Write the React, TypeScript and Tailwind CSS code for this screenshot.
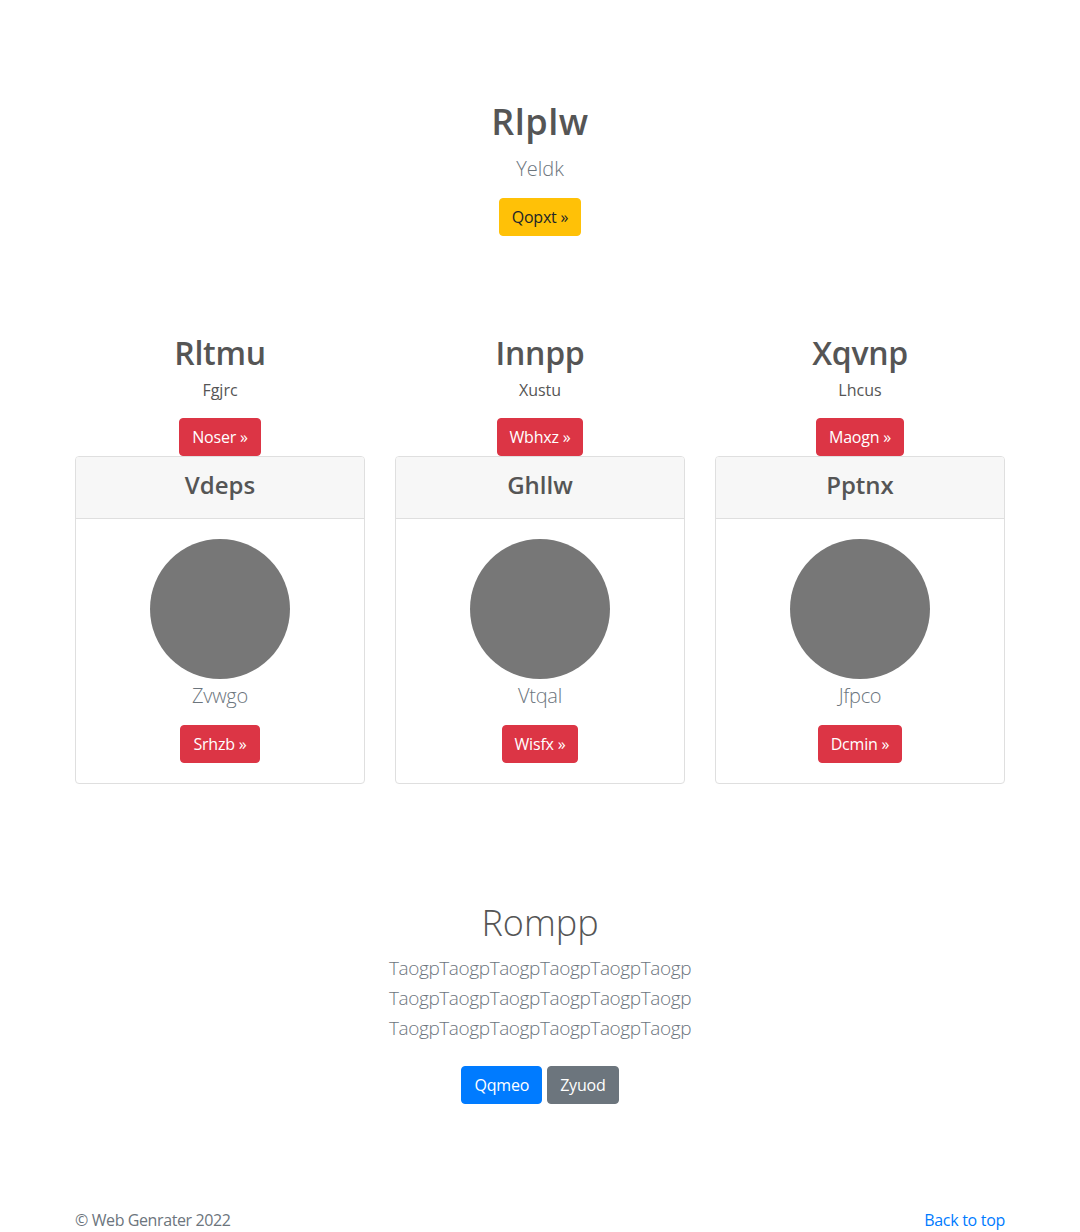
import React from "react";

const cols = [
  { title: "Rltmu", sub: "Fgjrc", btn: "Noser", card: "Vdeps", name: "Zvwgo", action: "Srhzb" },
  { title: "Innpp", sub: "Xustu", btn: "Wbhxz", card: "Ghllw", name: "Vtqal", action: "Wisfx" },
  { title: "Xqvnp", sub: "Lhcus", btn: "Maogn", card: "Pptnx", name: "Jfpco", action: "Dcmin" },
];

const btn = "inline-block rounded-[4px] border px-3 py-1.5 text-base leading-6 tracking-[-0.2px] font-['Open_Sans',sans-serif]";

const App: React.FC = () => {
  return (
    <div className="min-h-[1232px] bg-white text-[#555] font-['Open_Sans',sans-serif]">
      {/* Hero */}
      <section className="pt-[100px] text-center">
        <h1 className="text-[36px] font-semibold leading-[1.2] tracking-[0.5px] text-[#555]">Rlplw</h1>
        <p className="mt-[11px] text-[20px] font-light leading-[30px] text-[#6c757d]">Yeldk</p>
        <a className={`${btn} mt-[14px] border-[#ffc107] bg-[#ffc107] text-[#212529]`}>Qopxt &raquo;</a>
      </section>

      {/* Columns */}
      <section className="mx-auto mt-[98px] w-[960px] px-[15px]">
        <div className="grid grid-cols-3 gap-[30px]">
          {cols.map((c) => (
            <div key={c.title} className="flex flex-col items-center text-center">
              <h2 className="text-[32px] font-semibold leading-[1.2] tracking-[-0.3px] text-[#555]">{c.title}</h2>
              <p className="mt-[5px] text-base leading-6 text-[#555]">{c.sub}</p>
              <a className={`${btn} mt-[16px] border-[#dc3545] bg-[#dc3545] text-white`}>{c.btn} &raquo;</a>
              <div className="w-full overflow-hidden rounded-[4px] border border-[#dfdfdf]">
                <div className="border-b border-[#dfdfdf] bg-[#f7f7f7] px-5 pt-[13px] pb-[19px]">
                  <h4 className="text-[24px] font-semibold leading-[29px] text-[#555]">{c.card}</h4>
                </div>
                <div className="flex flex-col items-center p-5">
                  <div className="h-[140px] w-[140px] rounded-full bg-[#777]" />
                  <p className="mt-[2px] text-[20px] font-light leading-[30px] tracking-[-0.3px] text-[#6c757d]">{c.name}</p>
                  <a className={`${btn} mt-[14px] border-[#dc3545] bg-[#dc3545] text-white`}>{c.action} &raquo;</a>
                </div>
              </div>
            </div>
          ))}
        </div>
      </section>

      {/* Bottom */}
      <section className="mt-[117px] text-center">
        <h1 className="text-[36px] font-light leading-[1.2] text-[#555]">Rompp</h1>
        <p className="mx-auto mt-[9px] text-[19px] font-light leading-[30px] tracking-[-0.4px] text-[#6c757d]">
          TaogpTaogpTaogpTaogpTaogpTaogp
          <br />
          TaogpTaogpTaogpTaogpTaogpTaogp
          <br />
          TaogpTaogpTaogpTaogpTaogpTaogp
        </p>
        <div className="mt-[23px] flex justify-center gap-[5px]">
          <a className={`${btn} border-[#007bff] bg-[#007bff] text-white`}>Qqmeo</a>
          <a className={`${btn} border-[#6c757d] bg-[#6c757d] text-white`}>Zyuod</a>
        </div>
      </section>

      {/* Footer */}
      <footer className="mx-auto mt-[104px] flex w-[960px] justify-between px-[15px] text-base leading-6">
        <p className="tracking-[-0.4px] text-[#6c757d]">&copy; Web Genrater 2022</p>
        <a className="tracking-[-0.3px] text-[#007bff]">Back to top</a>
      </footer>
    </div>
  );
};

export default App;
